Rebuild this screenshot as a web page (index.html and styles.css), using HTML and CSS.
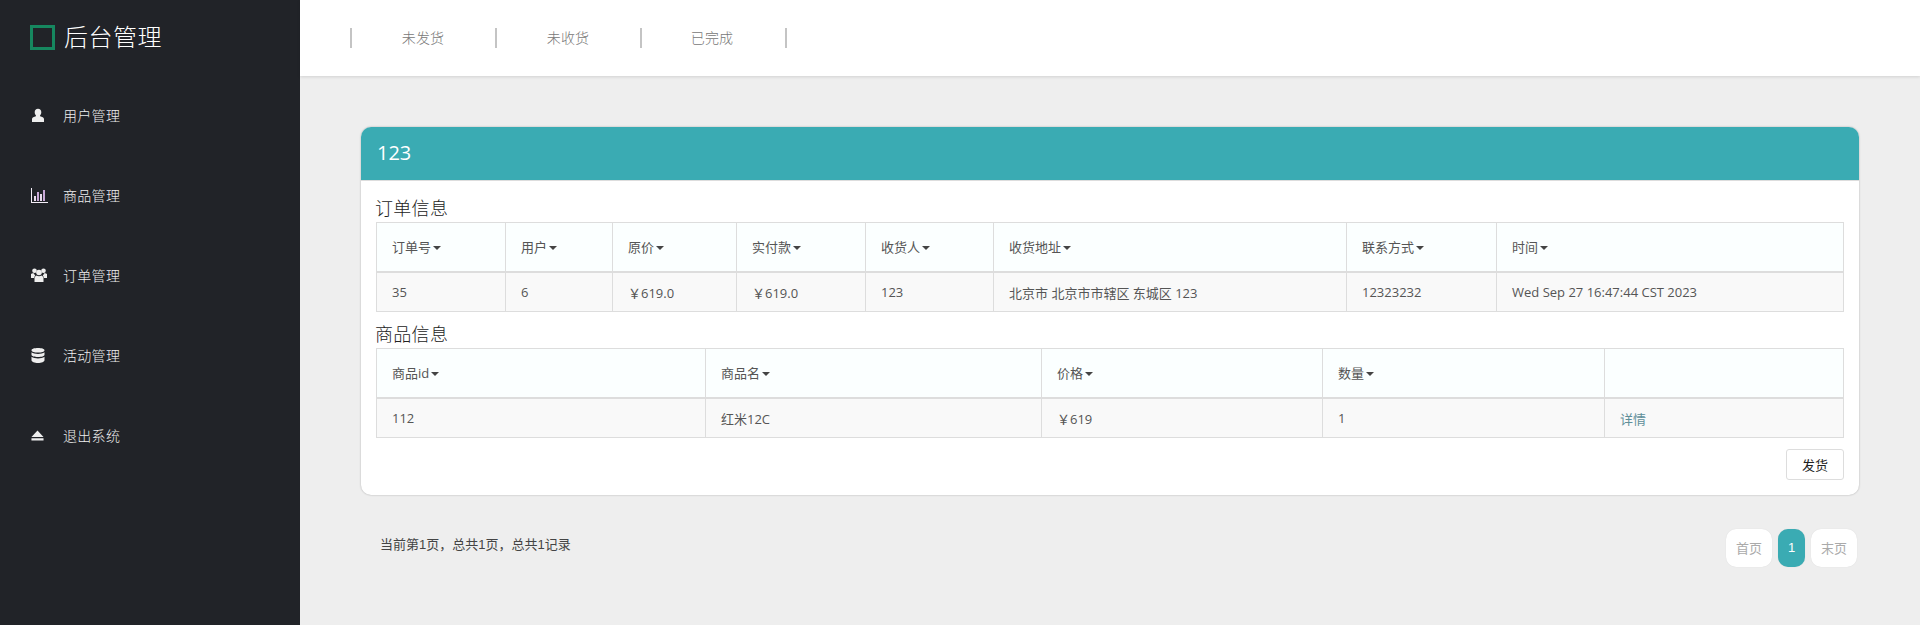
FILE: index.html
```html
<!DOCTYPE html>
<html lang="zh-CN">
<head>
<meta charset="utf-8">
<title>后台管理</title>
<link rel="stylesheet" href="styles.css">
</head>
<body>
<div class="app">
  <aside class="sidebar">
    <div class="brand"><span class="brand-mark"></span><span class="brand-name">后台管理</span></div>
    <nav class="side-nav">
      <a class="side-item"><span class="side-icon"><svg viewBox="0 0 14 15" width="14" height="15"><path d="M7 .8c2.100 0 3.300 1.500 3.300 3.400 0 1.300-.5 2.400-1.200 3.100v.9c1.900.6 3.900 1.300 3.900 2.800V14H1v-3c0-1.500 2-2.200 3.900-2.800v-.9C4.200 6.600 3.700 5.500 3.700 4.200 3.700 2.300 4.900.8 7 .8z"/></svg></span>用户管理</a>
      <a class="side-item"><span class="side-icon"><svg viewBox="0 0 17 15" width="17" height="15"><path class="chart-base" d="M0 0h1v14h16v1H0z"/><path class="chart-a" d="M3 8h2v5H3zM9 6h2v7H9z"/><path class="chart-b" d="M6 4h2v9H6zM12 2h2v11h-2z"/></svg></span>商品管理</a>
      <a class="side-item"><span class="side-icon"><svg viewBox="0 0 16 14" width="16" height="14"><circle cx="3.500" cy="2.800" r="2.300"/><circle cx="12.500" cy="2.800" r="2.300"/><circle cx="8" cy="4.500" r="2.800"/><path d="M0 6c1-.8 2-.8 3-.5.300 1 .8 1.700 1.300 2.200L3 9v1H0zM16 6c-1-.8-2-.8-3-.5-.3 1-.8 1.700-1.300 2.200L13 9v1h3zM5.500 7.500c1.500 1 3.500 1 5 0L12.500 9v5h-9V9z"/></svg></span>订单管理</a>
      <a class="side-item"><span class="side-icon"><svg viewBox="0 0 14 15" width="14" height="15"><path d="M7 0c3.500 0 6.500.8 6.500 2.300S10.500 4.600 7 4.600.5 3.800.5 2.300 3.500 0 7 0zM.5 4.300C2 5.500 4.500 6 7 6s5-.5 6.500-1.700v2.500C13.500 8.200 10.500 9 7 9S.5 8.200.5 6.800zM.5 8.800C2 10 4.500 10.400 7 10.400s5-.4 6.500-1.600v3.500C13.500 13.900 10.500 15 7 15S.5 13.900.5 12.300z"/></svg></span>活动管理</a>
      <a class="side-item"><span class="side-icon"><svg viewBox="0 0 14 11" width="13" height="11"><path d="M7 0l6.500 7H.5zM.5 8.500h13V11H.5z"/></svg></span>退出系统</a>
    </nav>
  </aside>
  <div class="content">
    <header class="topbar">
      <a class="tab">未发货</a>
      <a class="tab">未收货</a>
      <a class="tab">已完成</a>
    </header>
    <main class="main">
      <section class="panel">
        <h2 class="panel-head">123</h2>
        <div class="panel-body">
          <h3 class="section-title">订单信息</h3>
          <table class="data-table">
            <colgroup><col class="o1"><col class="o2"><col class="o3"><col class="o4"><col class="o5"><col class="o6"><col class="o7"><col></colgroup>
            <thead>
              <tr>
                <th>订单号<span class="caret"></span></th>
                <th>用户<span class="caret"></span></th>
                <th>原价<span class="caret"></span></th>
                <th>实付款<span class="caret"></span></th>
                <th>收货人<span class="caret"></span></th>
                <th>收货地址<span class="caret"></span></th>
                <th>联系方式<span class="caret"></span></th>
                <th>时间<span class="caret"></span></th>
              </tr>
            </thead>
            <tbody>
              <tr>
                <td>35</td><td>6</td><td>￥619.0</td><td>￥619.0</td><td>123</td>
                <td>北京市 北京市市辖区 东城区 123</td><td>12323232</td><td>Wed Sep 27 16:47:44 CST 2023</td>
              </tr>
            </tbody>
          </table>
          <h3 class="section-title">商品信息</h3>
          <table class="data-table">
            <colgroup><col class="g1"><col class="g2"><col class="g3"><col class="g4"><col></colgroup>
            <thead>
              <tr>
                <th>商品id<span class="caret"></span></th>
                <th>商品名<span class="caret"></span></th>
                <th>价格<span class="caret"></span></th>
                <th>数量<span class="caret"></span></th>
                <th></th>
              </tr>
            </thead>
            <tbody>
              <tr>
                <td>112</td><td>红米12C</td><td>￥619</td><td>1</td><td><a class="detail-link">详情</a></td>
              </tr>
            </tbody>
          </table>
          <div class="panel-actions"><button class="ship-btn">发货</button></div>
        </div>
      </section>
      <div class="footer-row">
        <span class="page-info">当前第1页，总共1页，总共1记录</span>
        <ul class="pager">
          <li class="page-btn">首页</li>
          <li class="page-btn active">1</li>
          <li class="page-btn">末页</li>
        </ul>
      </div>
    </main>
  </div>
</div>
</body>
</html>
```

FILE: styles.css
```css
* { box-sizing: border-box; }
html, body { margin: 0; height: 100%; overflow: hidden; }
body {
  font-family: "Open Sans", "Noto Sans CJK SC", sans-serif;
  font-size: 13px;
  color: #555;
  background: #eee;
}
.app { display: flex; height: 625px; overflow: hidden; }

.sidebar { width: 300px; flex: none; background: #212328; color: #ddd; }
.brand { display: flex; align-items: center; height: 76px; padding: 0 0 2px 30px; gap: 9px; }
.brand-mark { width: 25px; height: 25px; border: 3px solid #16875f; }
.brand-name { font-size: 24px; color: #fff; line-height: 1; font-weight: 300; letter-spacing: .5px; }
.side-nav { display: flex; flex-direction: column; }
.side-item { display: flex; align-items: center; height: 80px; padding: 0 0 2px 30px; font-size: 14px; font-weight: 300; letter-spacing: .3px; color: #eee; }
.side-icon { width: 33px; display: flex; justify-content: flex-start; padding-left: 1px; flex: none; }
.side-icon svg { fill: #eee; display: block; }
.chart-base { fill: #f4eef8; }
.chart-a { fill: #e9dcec; }
.chart-b { fill: #c9a9d8; }

.content { flex: 1; min-width: 0; display: flex; flex-direction: column; }
.topbar {
  height: 76px; flex: none; background: #fff; display: flex; align-items: center;
  padding-left: 50px; box-shadow: 0 1px 3px rgba(0,0,0,.12);
}
.tab {
  width: 145px; height: 20px; line-height: 20px; text-align: center; font-size: 14px; font-weight: 300; letter-spacing: .2px; color: #777;
  border-left: 2px solid #c4c4c4; padding-right: 1px; margin-top: -1px;
}
.tab:last-child { width: 147px; padding-right: 3px; border-right: 2px solid #c4c4c4; }

.main { flex: 1; padding: 51px 61px 0; }
.panel { background: #fff; border-radius: 10px; box-shadow: 0 0 2px rgba(0,0,0,.3); overflow: hidden; }
.panel-head {
  margin: 0; height: 54px; line-height: 51px; padding-left: 16px; font-size: 20px; font-weight: 400;
  color: #fff; background: #3aabb3; border-bottom: 1px solid #ddd;
}
.panel-body { padding: 16px 15px 15px; }
.section-title { margin: 0 0 0 -1px; height: 25px; line-height: 22px; font-size: 18px; font-weight: 300; letter-spacing: .3px; color: #222; }
.data-table {
  width: 100%; table-layout: fixed; border-collapse: collapse; margin-bottom: 11px; font-size: 13px; color: #555;
}
.data-table th, .data-table td { border: 1px solid #ddd; padding: 0 15px; text-align: left; font-weight: 400; }
.data-table th { height: 49px; padding-bottom: 1px; background: #fbffff; border-bottom-width: 2px; }
.data-table td { height: 40px; padding-top: 1px; background: #f9f9f9; }
.o1 { width: 129px; } .o2 { width: 107px; } .o3 { width: 124px; } .o4 { width: 129px; }
.o5 { width: 128px; } .o6 { width: 353px; } .o7 { width: 150px; }
.g1 { width: 329px; } .g2 { width: 336px; } .g3 { width: 281px; } .g4 { width: 282px; }
.caret {
  display: inline-block; width: 0; height: 0; margin-left: 2px; vertical-align: middle;
  border-top: 4px solid #444; border-left: 4px solid transparent; border-right: 4px solid transparent;
}
.detail-link { color: #5f8f99; font-size: 13px; }
.panel-actions { display: flex; justify-content: flex-end; }
.ship-btn {
  width: 58px; height: 31px; padding: 0; background: #fff; border: 1px solid #ddd; border-radius: 3px;
  font-family: inherit; font-size: 13px; color: #222;
}

.footer-row { display: flex; justify-content: space-between; align-items: flex-start; margin-top: 34px; padding: 0 2px 0 19px; }
.page-info { font-family: "Liberation Sans", "Noto Sans CJK SC", sans-serif; line-height: 32px; color: #444; }
.pager { display: flex; gap: 6px; margin: 0; padding: 0; list-style: none; }
.page-btn {
  width: 46px; height: 38px; line-height: 38px; text-align: center; background: #fff; border-radius: 10px;
  font-size: 13px; color: #aaa; box-shadow: 0 0 1px rgba(0,0,0,.12);
}
.page-btn.active { width: 27px; background: #3aabb3; color: #fff; font-family: "Liberation Sans", sans-serif; }
```
